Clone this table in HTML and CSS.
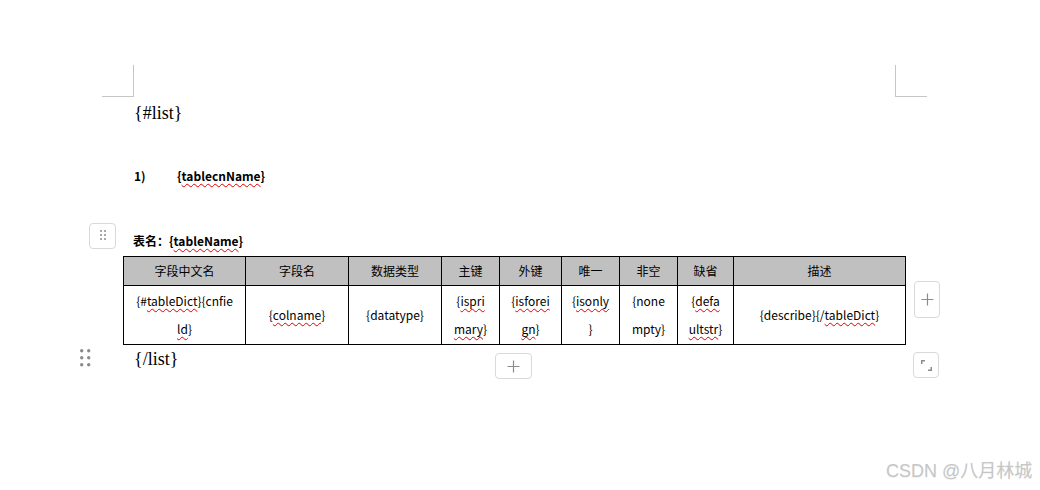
FILE: index.html
```html
<!DOCTYPE html>
<html lang="zh">
<head>
<meta charset="utf-8">
<title>模板</title>
<link rel="stylesheet" href="styles.css">
</head>
<body>
<div class="page">
  <div class="margins">
    <span class="corner corner-l"></span>
    <span class="corner corner-r"></span>
  </div>
  <div class="doc">
    <p class="tag tag-open">{#list}</p>
    <h3 class="heading"><span class="num">1)</span><span>{<span class="sp">tablecnName</span>}</span></h3>
    <p class="caption">表名：{<span class="sp">tableName</span>}</p>
    <table class="fields">
      <colgroup>
        <col class="c1"><col class="c2"><col class="c3"><col class="c4"><col class="c5"><col class="c6"><col class="c7"><col class="c8"><col class="c9">
      </colgroup>
      <tr class="head">
        <th>字段中文名</th><th>字段名</th><th>数据类型</th><th>主键</th><th>外键</th><th>唯一</th><th>非空</th><th>缺省</th><th>描述</th>
      </tr>
      <tr class="body">
        <td>{#<span class="sp">tableDict</span>}{cnfie<br><span class="sp">ld</span>}</td>
        <td>{<span class="sp">colname</span>}</td>
        <td>{datatype}</td>
        <td>{<span class="sp">ispri</span><br><span class="sp">mary</span>}</td>
        <td>{<span class="sp">isforei</span><br><span class="sp">gn</span>}</td>
        <td>{<span class="sp">isonly</span><br>}</td>
        <td>{none<br>mpty}</td>
        <td>{<span class="sp">defa</span><br><span class="sp">ultstr</span>}</td>
        <td>{describe}{/<span class="sp">tableDict</span>}</td>
      </tr>
    </table>
    <p class="tag tag-close">{/list}</p>
  </div>

  <div class="btn handle-box">
    <svg width="8" height="12" viewBox="0 0 8 12"><g fill="#a8a8a8"><rect x="0" y="0" width="2" height="2"/><rect x="4" y="0" width="2" height="2"/><rect x="0" y="4" width="2" height="2"/><rect x="4" y="4" width="2" height="2"/><rect x="0" y="8" width="2" height="2"/><rect x="4" y="8" width="2" height="2"/></g></svg>
  </div>
  <div class="drag">
    <svg width="11" height="18" viewBox="0 0 11 18"><g fill="#8a8a8a"><circle cx="1.7" cy="1.7" r="1.7"/><circle cx="8.7" cy="1.7" r="1.7"/><circle cx="1.7" cy="8.7" r="1.7"/><circle cx="8.7" cy="8.7" r="1.7"/><circle cx="1.7" cy="15.7" r="1.7"/><circle cx="8.7" cy="15.7" r="1.7"/></g></svg>
  </div>
  <div class="btn add-col">
    <svg width="13" height="13" viewBox="0 0 13 13"><path d="M6.5 0.5v12M0.5 6.5h12" stroke="#8c8c8c" stroke-width="1.2" fill="none"/></svg>
  </div>
  <div class="btn add-row">
    <svg width="13" height="13" viewBox="0 0 13 13"><path d="M6.5 0.5v12M0.5 6.5h12" stroke="#8c8c8c" stroke-width="1.2" fill="none"/></svg>
  </div>
  <div class="btn resize">
    <svg width="11" height="11" viewBox="0 0 11 11"><path d="M0 0h4v1.5h-2.5v2.5h-1.5z" fill="#8c8c8c"/><path d="M11 11h-4v-1.5h2.5v-2.5h1.5z" fill="#8c8c8c"/></svg>
  </div>

  <div class="watermark">CSDN @八月林城</div>
</div>
</body>
</html>
```

FILE: styles.css
```css
html, body {
  margin: 0;
  padding: 0;
  background: #ffffff;
}

.page {
  position: relative;
  width: 1040px;
  height: 490px;
  overflow: hidden;
  font-family: "Noto Sans CJK SC", "Noto Sans", sans-serif;
  color: #000;
}

.margins {
  display: flex;
  justify-content: space-between;
  margin: 65px 113px 0 102px;
  height: 32px;
}

.corner {
  display: block;
  width: 31px;
  height: 31px;
  border-bottom: 1px solid #c6c6c6;
}

.corner-l {
  border-right: 1px solid #c6c6c6;
}

.corner-r {
  border-left: 1px solid #c6c6c6;
}

.doc {
  margin-left: 134px;
}

.tag {
  margin: 0;
  font-family: "Liberation Serif", "Times New Roman", serif;
  font-size: 18px;
  line-height: 24px;
  height: 24px;
}

.tag-open {
  margin-top: 4px;
}

.tag-close {
  margin-top: 2px;
}

.heading {
  margin: 43px 0 0 0;
  font-size: 12px;
  font-weight: bold;
  line-height: 16px;
  height: 16px;
  display: flex;
}

.num {
  width: 43px;
}

.caption {
  margin: 49px 0 0 -1px;
  font-size: 12px;
  font-weight: bold;
  line-height: 16px;
  height: 16px;
}

.sp {
  text-decoration: underline wavy #e00000;
  text-decoration-thickness: 1px;
  text-underline-offset: 2px;
  text-decoration-skip-ink: none;
}

.fields {
  margin: 7px 0 0 -11px;
  border-collapse: collapse;
  table-layout: fixed;
  width: 783px;
  font-size: 12px;
}

.c1 { width: 122px; }
.c2 { width: 103px; }
.c3 { width: 93px; }
.c4 { width: 58px; }
.c5 { width: 62px; }
.c6 { width: 58px; }
.c7 { width: 58px; }
.c8 { width: 56px; }
.c9 { width: 172px; }

.fields th,
.fields td {
  border: 1px solid #000;
  padding: 0 2px;
  text-align: center;
  vertical-align: middle;
  line-height: 28px;
  white-space: nowrap;
  overflow: hidden;
}

.fields th {
  background: #c0c0c0;
  font-weight: normal;
}

.head {
  height: 29px;
}

.body {
  height: 59px;
}

.btn {
  position: absolute;
  box-sizing: border-box;
  border: 1px solid #d9d9d9;
  border-radius: 4px;
  background: #fff;
  display: flex;
  align-items: center;
  justify-content: center;
}

.handle-box {
  left: 89px;
  top: 223px;
  width: 27px;
  height: 26px;
}

.handle-box svg {
  margin-left: 2px;
}

.drag {
  position: absolute;
  left: 80px;
  top: 349px;
  width: 11px;
  height: 18px;
  display: flex;
}

.add-col {
  left: 914px;
  top: 281px;
  width: 26px;
  height: 37px;
}

.add-row {
  left: 495px;
  top: 353px;
  width: 37px;
  height: 26px;
}

.resize {
  left: 913px;
  top: 352px;
  width: 26px;
  height: 26px;
}

.watermark {
  position: absolute;
  left: 886px;
  top: 460px;
  font-family: "Liberation Sans", "Noto Sans CJK SC", sans-serif;
  font-size: 18px;
  line-height: 22px;
  color: #c6c6c6;
  text-shadow: 0 1px 1px rgba(0, 0, 0, 0.06);
  white-space: nowrap;
}
```
